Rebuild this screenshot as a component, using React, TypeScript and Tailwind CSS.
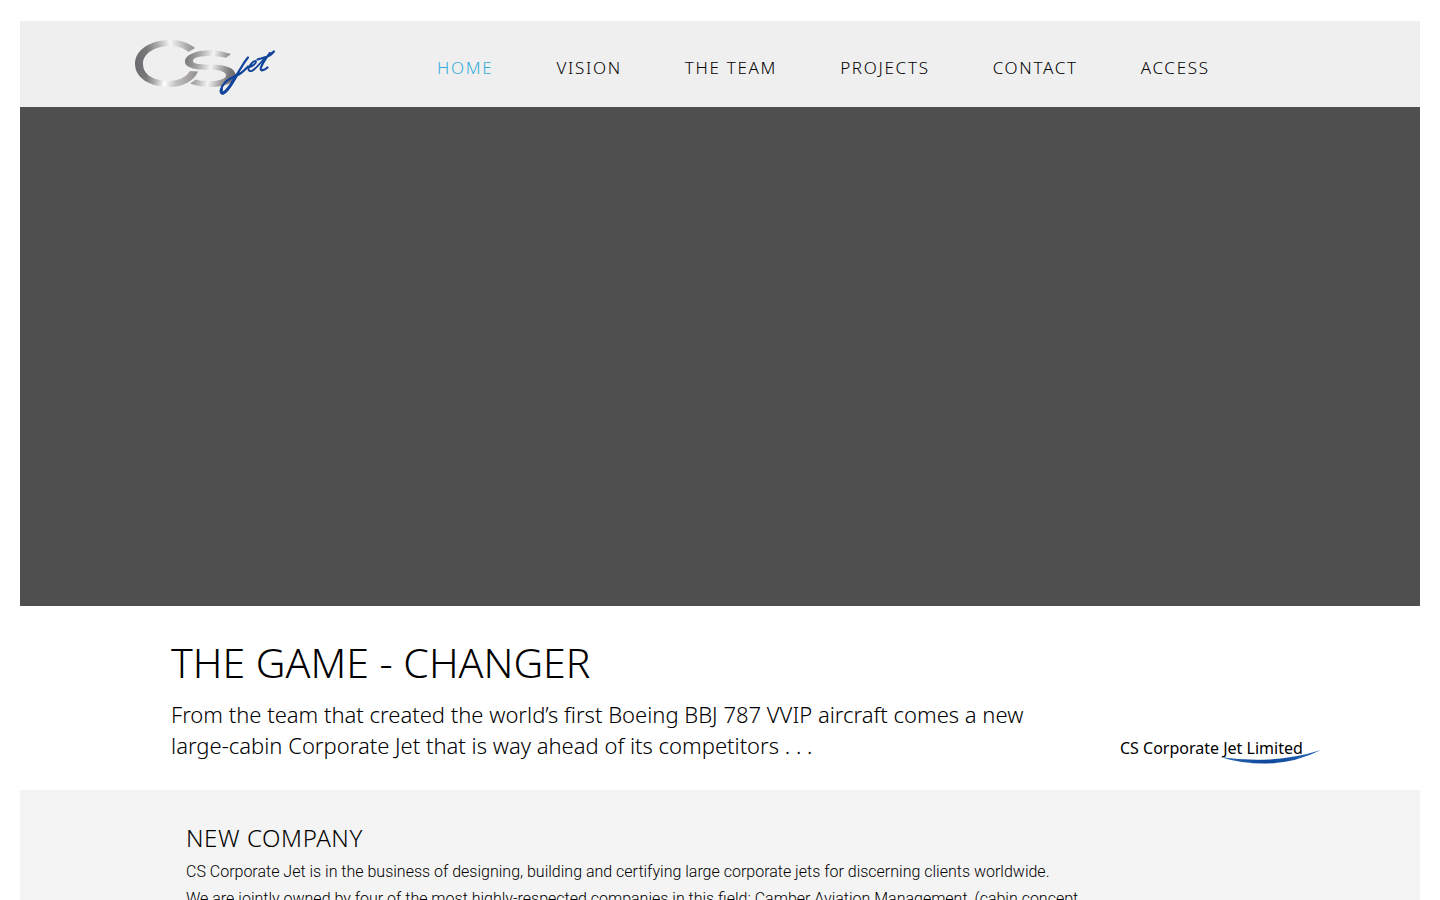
const navItems = [
  { label: "HOME", href: "#home", active: true },
  { label: "VISION", href: "#vision" },
  { label: "THE TEAM", href: "#team" },
  { label: "PROJECTS", href: "#projects" },
  { label: "CONTACT", href: "#contact" },
  { label: "ACCESS", href: "#access" },
];

function Logo() {
  return (
    <svg className="h-14 w-[141px]" viewBox="0 0 141 56" role="img" aria-label="CS Jet">
      <defs>
        <linearGradient id="ring-top" gradientUnits="userSpaceOnUse" x1="0" y1="20" x2="62" y2="8">
          <stop offset="0" stopColor="#6b6b6d" />
          <stop offset="0.22" stopColor="#79797b" />
          <stop offset="0.42" stopColor="#b5b3b4" />
          <stop offset="0.6" stopColor="#f7f7f7" />
          <stop offset="0.76" stopColor="#c5c3c4" />
          <stop offset="1" stopColor="#858385" />
        </linearGradient>
        <linearGradient id="ring-bottom" gradientUnits="userSpaceOnUse" x1="0" y1="26" x2="62" y2="38">
          <stop offset="0" stopColor="#6b6b6d" />
          <stop offset="0.2" stopColor="#77777a" />
          <stop offset="0.36" stopColor="#b0aeb0" />
          <stop offset="0.51" stopColor="#ffffff" />
          <stop offset="0.68" stopColor="#c3c1c2" />
          <stop offset="1" stopColor="#908e90" />
        </linearGradient>
        <linearGradient id="letter-s" gradientUnits="userSpaceOnUse" x1="50" y1="24" x2="101" y2="34">
          <stop offset="0" stopColor="#7b7a7c" />
          <stop offset="0.25" stopColor="#a9a7a8" />
          <stop offset="0.5" stopColor="#f4f4f4" />
          <stop offset="0.68" stopColor="#b4b2b3" />
          <stop offset="0.88" stopColor="#777577" />
          <stop offset="1" stopColor="#6e6d6f" />
        </linearGradient>
      </defs>
      <path fill="url(#ring-top)" d="M0 24C0 10 15 0 35 0C46 0 54 3 60 8L53.500 12C49 8 43 6 36 6C20 6 8 13 8 24Z" />
      <path fill="url(#ring-bottom)" d="M0 23.800C0 38 15 47 34 47C48 47 59 41 63 31.500L55 31C51 37.500 43 41 34 41C19 41 8 35 8 23.800Z" />
      <path
        fill="url(#letter-s)"
        d="M96 14Q86 10.300 76 10.300C61 10.300 50 15 50 21.500C50 28.500 62 30 77 30C86 30 91 32 91 35.500C91 39 84 41 74 41Q66 41 61 39.500L55 43.500Q64 47 76 47C90 47 100.500 42 100.500 35C100.500 28 90 24.500 77 24.500C66 24.500 58 24.500 58 20.800C58 17.200 66 16 76 16Q84 16 91 17.700Z"
      />
      <g fill="none" stroke="#11449a" strokeLinecap="round" strokeLinejoin="round">
        <path strokeWidth="2.200" d="M113 17.500C109 22 104 31 99.500 39C95 47 91 53 88 53.500C84.500 54 85 48 90 42.500C94 38 102 36 106 33C109 31 111 28.500 113 26.500" />
        <path strokeWidth="3" d="M102 34.500C97 43.500 92 52 88 53C86.300 53.300 86 51.500 86.500 49.500" />
        <path strokeWidth="1.900" d="M113 27.500C117 26.500 121.500 23.500 121 21.500C120 19.500 115 24 113.800 27.500C112.500 31 115.500 32.500 119 29.500C122 27 126 22.500 129 19" />
        <path strokeWidth="2.200" d="M135 13C131 18 127 24 125.800 28C125 32 129.500 30 132.500 27.500M122.500 19.500C127 18 133.500 17 136 14.500Q137.500 12.500 139 11.500" />
      </g>
    </svg>
  );
}

export default function App() {
  return (
    <div className="min-h-screen bg-white px-5 pt-[21px] font-['Noto_Sans',sans-serif] font-light text-black">
      <header className="flex items-center bg-[#efefef] pt-[19px] pb-[11px] pl-[115px]">
        <a href="#home">
          <span className="block"><Logo /></span>
        </a>
        <nav className="ml-[161px]" aria-label="Main">
          <ul className="flex gap-[63px]">
            {navItems.map((item) => (
              <li key={item.label}>
                <a
                  href={item.href}
                  className={
                    item.active
                      ? "text-[17px] leading-6 tracking-widest whitespace-nowrap text-[#35addc]"
                      : "text-[17px] leading-6 tracking-widest whitespace-nowrap"
                  }
                >
                  {item.label}
                </a>
              </li>
            ))}
          </ul>
        </nav>
      </header>

      <main>
        <div className="h-[499px] bg-[#4f4f4f]" />

        <section className="flex items-end justify-between pt-[31px] pr-[99px] pb-[26px] pl-[151px]">
          <div className="pb-[3px]">
            <h1 className="text-[41px] leading-[50px]">THE GAME - CHANGER</h1>
            <p className="mt-3 text-[22px] leading-[31px]">
              From the team that created the world’s first Boeing BBJ 787 VVIP aircraft comes a new
              <br />
              large-cabin Corporate Jet that is way ahead of its competitors . . .
            </p>
          </div>
          <div className="relative w-[201px] pb-1">
            <span className="text-[16px] leading-6 font-normal whitespace-nowrap">CS Corporate Jet Limited</span>
            <svg className="absolute right-0 bottom-0 h-4 w-[101px]" viewBox="0 0 101 16" aria-hidden="true">
              <defs>
                <linearGradient id="swoosh" x1="0" x2="1" y1="0" y2="0">
                  <stop offset="0" stopColor="#2b68b4" />
                  <stop offset="0.45" stopColor="#0e479b" />
                  <stop offset="1" stopColor="#2465b4" />
                </linearGradient>
              </defs>
              <path fill="url(#swoosh)" d="M0 9Q54 17 101 2Q75 15 47 15.500Q22 16 0 9Z" />
            </svg>
          </div>
        </section>

        <section className="bg-[#f4f4f4] px-[166px] pt-8 pb-10">
          <h2 className="text-[24px] leading-8 tracking-wide">NEW COMPANY</h2>
          <p className="mt-1 font-['Roboto',sans-serif] text-[16px] leading-[27px]">
            CS Corporate Jet is in the business of designing, building and certifying large corporate jets for discerning clients worldwide.
            <br />
            We are jointly owned by four of the most highly-respected companies in this field: Camber Aviation Management, (cabin concept
          </p>
        </section>
      </main>
    </div>
  );
}
